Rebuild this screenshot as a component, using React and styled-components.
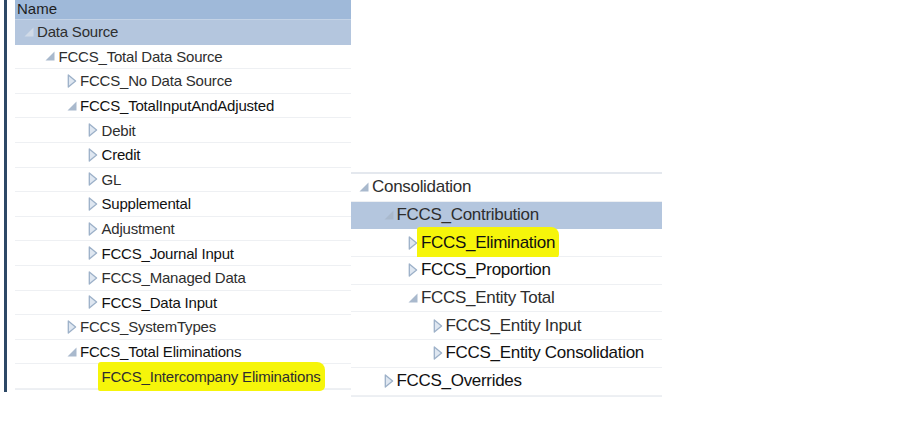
import React from 'react';
import styled, { createGlobalStyle } from 'styled-components';

const GlobalStyle = createGlobalStyle`
  html, body {
    margin: 0;
    padding: 0;
    background: #ffffff;
  }
  body {
    font-family: 'Liberation Sans', Arial, sans-serif;
  }
`;

const Page = styled.div`
  display: flex;
  align-items: flex-start;
  width: 911px;
  height: 431px;
  background: #ffffff;
`;

const Gutter = styled.div`
  width: 3px;
  height: 392px;
  margin-left: 4px;
  margin-right: 8px;
  background: #2d4866;
`;

const Panel = styled.div`
  display: flex;
  flex-direction: column;
  width: ${({ width }) => width}px;
  margin-top: ${({ offset }) => offset || 0}px;
  border-top: ${({ offset }) => (offset ? '2px solid #e4e8ee' : 'none')};
  border-bottom: 1px solid #eceff3;
`;

const Header = styled.div`
  height: 19px;
  line-height: 17px;
  padding-left: 2px;
  font-size: 15px;
  color: #1e1e1e;
  background: #9fb9d9;
  border-bottom: 1px solid #c4d3e6;
`;

const Row = styled.div`
  display: flex;
  align-items: center;
  height: ${({ h }) => h}px;
  box-sizing: border-box;
  padding-left: ${({ indent }) => indent}px;
  font-size: ${({ size }) => size}px;
  color: ${({ strong }) => (strong ? '#111111' : '#2e2e2e')};
  background: ${({ selected }) => (selected ? '#b4c6de' : '#ffffff')};
  border-bottom: 1px solid ${({ selected }) => (selected ? '#b4c6de' : '#eef0f3')};
  white-space: nowrap;
`;

const Toggle = styled.span`
  display: inline-flex;
  align-items: center;
  justify-content: center;
  width: ${({ w }) => w}px;
  flex: none;
`;

const Label = styled.span`
  letter-spacing: ${({ spacing }) => spacing}px;
  padding: ${({ marked }) => (marked ? '6px 4px 6px' : '0')};
  margin-left: ${({ marked }) => (marked ? '-4px' : '0')};
  background: ${({ marked }) => (marked ? '#f6f50a' : 'transparent')};
  border-radius: ${({ marked }) => (marked ? '3px 8px 5px 2px' : '0')};
`;

function Expanded({ light }) {
  return (
    <svg width="10" height="10" viewBox="0 0 10 10">
      <path d="M9.5 0.5 L9.5 9.5 L0.5 9.5 Z" fill={light ? '#d0dae7' : '#a9b9cd'} />
    </svg>
  );
}

function Collapsed() {
  return (
    <svg width="10" height="14" viewBox="0 0 10 14">
      <path
        d="M1.3 1 L8.6 7 L1.3 13 Z"
        fill="#dfe7f1"
        stroke="#9cb0c8"
        strokeWidth="1.3"
        strokeLinejoin="round"
      />
    </svg>
  );
}

const leftTree = [
  { label: 'Data Source', depth: 0, state: 'open', selected: true },
  { label: 'FCCS_Total Data Source', depth: 1, state: 'open' },
  { label: 'FCCS_No Data Source', depth: 2, state: 'closed' },
  { label: 'FCCS_TotalInputAndAdjusted', depth: 2, state: 'open', strong: true },
  { label: 'Debit', depth: 3, state: 'closed' },
  { label: 'Credit', depth: 3, state: 'closed', strong: true },
  { label: 'GL', depth: 3, state: 'closed' },
  { label: 'Supplemental', depth: 3, state: 'closed', strong: true },
  { label: 'Adjustment', depth: 3, state: 'closed' },
  { label: 'FCCS_Journal Input', depth: 3, state: 'closed', strong: true },
  { label: 'FCCS_Managed Data', depth: 3, state: 'closed' },
  { label: 'FCCS_Data Input', depth: 3, state: 'closed', strong: true },
  { label: 'FCCS_SystemTypes', depth: 2, state: 'closed' },
  { label: 'FCCS_Total Eliminations', depth: 2, state: 'open', strong: true },
  { label: 'FCCS_Intercompany Eliminations', depth: 3, state: 'leaf', marked: true },
];

const rightTree = [
  { label: 'Consolidation', depth: 0, state: 'open' },
  { label: 'FCCS_Contribution', depth: 1, state: 'open', selected: true },
  { label: 'FCCS_Elimination', depth: 2, state: 'closed', marked: true, strong: true },
  { label: 'FCCS_Proportion', depth: 2, state: 'closed', strong: true },
  { label: 'FCCS_Entity Total', depth: 2, state: 'open' },
  { label: 'FCCS_Entity Input', depth: 3, state: 'closed' },
  { label: 'FCCS_Entity Consolidation', depth: 3, state: 'closed', strong: true },
  { label: 'FCCS_Overrides', depth: 1, state: 'closed', strong: true },
];

function TreeRows({ items, rowHeight, base, step, size, toggleWidth, spacing }) {
  return items.map(item => (
    <Row
      key={item.label}
      h={rowHeight}
      indent={base + item.depth * step}
      size={size}
      strong={item.strong}
      selected={item.selected}
    >
      <Toggle w={toggleWidth}>
        {item.state === 'open' && <Expanded light={item.selected && item.depth === 0} />}
        {item.state === 'closed' && <Collapsed />}
      </Toggle>
      <Label spacing={spacing} marked={item.marked}>
        {item.label}
      </Label>
    </Row>
  ));
}

export default function App() {
  return (
    <Page>
      <GlobalStyle />
      <Gutter />
      <Panel width={336}>
        <Header>Name</Header>
        <TreeRows
          items={leftTree}
          rowHeight={24.6}
          base={5}
          step={21.5}
          size={15}
          toggleWidth={17}
          spacing={-0.2}
        />
      </Panel>
      <Panel width={311} offset={172}>
        <TreeRows
          items={rightTree}
          rowHeight={27.7}
          base={5}
          step={24.5}
          size={17}
          toggleWidth={16}
          spacing={-0.3}
        />
      </Panel>
    </Page>
  );
}
